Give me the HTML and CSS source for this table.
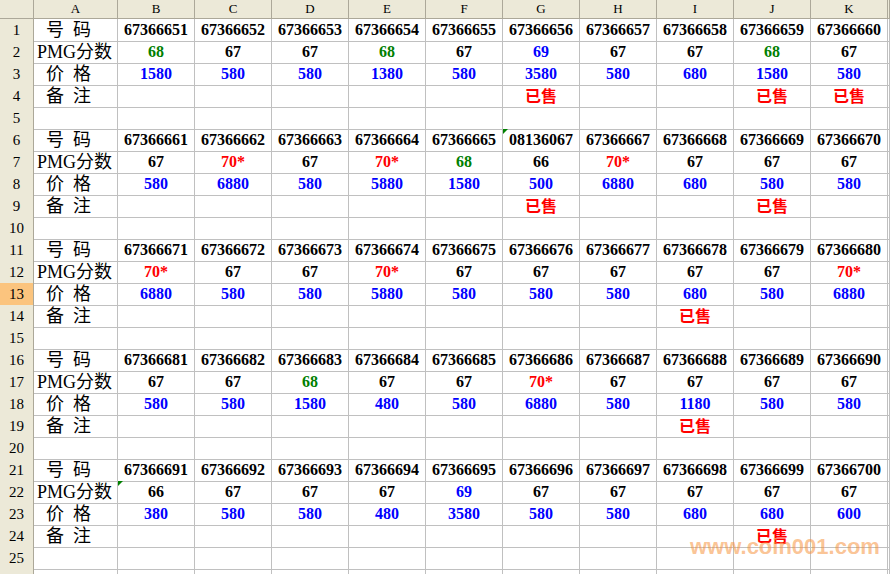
FILE: index.html
```html
<!DOCTYPE html>
<html>
<head>
<meta charset="utf-8">
<link rel="stylesheet" href="styles.css">
</head>
<body>
<div class="sheet">
  <div class="row top">
    <div class="h corner"></div><div class="h col">A</div><div class="h col">B</div><div class="h col">C</div><div class="h col">D</div><div class="h col">E</div><div class="h col">F</div><div class="h col">G</div><div class="h col">H</div><div class="h col">I</div><div class="h col">J</div><div class="h col">K</div><div class="h col"></div>
  </div>

  <div class="row"><div class="h">1</div><div class="a">  号  码</div><div class="k">67366651</div><div class="k">67366652</div><div class="k">67366653</div><div class="k">67366654</div><div class="k">67366655</div><div class="k">67366656</div><div class="k">67366657</div><div class="k">67366658</div><div class="k">67366659</div><div class="k">67366660</div><div></div></div>
  <div class="row"><div class="h">2</div><div class="a">PMG分数</div><div class="g">68</div><div class="k">67</div><div class="k">67</div><div class="g">68</div><div class="k">67</div><div class="b">69</div><div class="k">67</div><div class="k">67</div><div class="g">68</div><div class="k">67</div><div></div></div>
  <div class="row"><div class="h">3</div><div class="a">  价  格</div><div class="b">1580</div><div class="b">580</div><div class="b">580</div><div class="b">1380</div><div class="b">580</div><div class="b">3580</div><div class="b">580</div><div class="b">680</div><div class="b">1580</div><div class="b">580</div><div></div></div>
  <div class="row"><div class="h">4</div><div class="a">  备  注</div><div></div><div></div><div></div><div></div><div></div><div class="s">已售</div><div></div><div></div><div class="s">已售</div><div class="s">已售</div><div></div></div>
  <div class="row"><div class="h">5</div><div></div><div></div><div></div><div></div><div></div><div></div><div></div><div></div><div></div><div></div><div></div><div></div></div>

  <div class="row"><div class="h">6</div><div class="a">  号  码</div><div class="k">67366661</div><div class="k">67366662</div><div class="k">67366663</div><div class="k">67366664</div><div class="k">67366665</div><div class="k cm">08136067</div><div class="k">67366667</div><div class="k">67366668</div><div class="k">67366669</div><div class="k">67366670</div><div></div></div>
  <div class="row"><div class="h">7</div><div class="a">PMG分数</div><div class="k">67</div><div class="r">70*</div><div class="k">67</div><div class="r">70*</div><div class="g">68</div><div class="k">66</div><div class="r">70*</div><div class="k">67</div><div class="k">67</div><div class="k">67</div><div></div></div>
  <div class="row"><div class="h">8</div><div class="a">  价  格</div><div class="b">580</div><div class="b">6880</div><div class="b">580</div><div class="b">5880</div><div class="b">1580</div><div class="b">500</div><div class="b">6880</div><div class="b">680</div><div class="b">580</div><div class="b">580</div><div></div></div>
  <div class="row"><div class="h">9</div><div class="a">  备  注</div><div></div><div></div><div></div><div></div><div></div><div class="s">已售</div><div></div><div></div><div class="s">已售</div><div></div><div></div></div>
  <div class="row"><div class="h">10</div><div></div><div></div><div></div><div></div><div></div><div></div><div></div><div></div><div></div><div></div><div></div><div></div></div>

  <div class="row"><div class="h">11</div><div class="a">  号  码</div><div class="k">67366671</div><div class="k">67366672</div><div class="k">67366673</div><div class="k">67366674</div><div class="k">67366675</div><div class="k">67366676</div><div class="k">67366677</div><div class="k">67366678</div><div class="k">67366679</div><div class="k">67366680</div><div></div></div>
  <div class="row"><div class="h">12</div><div class="a">PMG分数</div><div class="r">70*</div><div class="k">67</div><div class="k">67</div><div class="r">70*</div><div class="k">67</div><div class="k">67</div><div class="k">67</div><div class="k">67</div><div class="k">67</div><div class="r">70*</div><div></div></div>
  <div class="row"><div class="h sel">13</div><div class="a">  价  格</div><div class="b">6880</div><div class="b">580</div><div class="b">580</div><div class="b">5880</div><div class="b">580</div><div class="b">580</div><div class="b">580</div><div class="b">680</div><div class="b">580</div><div class="b">6880</div><div></div></div>
  <div class="row"><div class="h">14</div><div class="a">  备  注</div><div></div><div></div><div></div><div></div><div></div><div></div><div></div><div class="s">已售</div><div></div><div></div><div></div></div>
  <div class="row"><div class="h">15</div><div></div><div></div><div></div><div></div><div></div><div></div><div></div><div></div><div></div><div></div><div></div><div></div></div>

  <div class="row"><div class="h">16</div><div class="a">  号  码</div><div class="k">67366681</div><div class="k">67366682</div><div class="k">67366683</div><div class="k">67366684</div><div class="k">67366685</div><div class="k">67366686</div><div class="k">67366687</div><div class="k">67366688</div><div class="k">67366689</div><div class="k">67366690</div><div></div></div>
  <div class="row"><div class="h">17</div><div class="a">PMG分数</div><div class="k">67</div><div class="k">67</div><div class="g">68</div><div class="k">67</div><div class="k">67</div><div class="r">70*</div><div class="k">67</div><div class="k">67</div><div class="k">67</div><div class="k">67</div><div></div></div>
  <div class="row"><div class="h">18</div><div class="a">  价  格</div><div class="b">580</div><div class="b">580</div><div class="b">1580</div><div class="b">480</div><div class="b">580</div><div class="b">6880</div><div class="b">580</div><div class="b">1180</div><div class="b">580</div><div class="b">580</div><div></div></div>
  <div class="row"><div class="h">19</div><div class="a">  备  注</div><div></div><div></div><div></div><div></div><div></div><div></div><div></div><div class="s">已售</div><div></div><div></div><div></div></div>
  <div class="row"><div class="h">20</div><div></div><div></div><div></div><div></div><div></div><div></div><div></div><div></div><div></div><div></div><div></div><div></div></div>

  <div class="row"><div class="h">21</div><div class="a">  号  码</div><div class="k">67366691</div><div class="k">67366692</div><div class="k">67366693</div><div class="k">67366694</div><div class="k">67366695</div><div class="k">67366696</div><div class="k">67366697</div><div class="k">67366698</div><div class="k">67366699</div><div class="k">67366700</div><div></div></div>
  <div class="row"><div class="h">22</div><div class="a">PMG分数</div><div class="k cm">66</div><div class="k">67</div><div class="k">67</div><div class="k">67</div><div class="b">69</div><div class="k">67</div><div class="k">67</div><div class="k">67</div><div class="k">67</div><div class="k">67</div><div></div></div>
  <div class="row"><div class="h">23</div><div class="a">  价  格</div><div class="b">380</div><div class="b">580</div><div class="b">580</div><div class="b">480</div><div class="b">3580</div><div class="b">580</div><div class="b">580</div><div class="b">680</div><div class="b">680</div><div class="b">600</div><div></div></div>
  <div class="row"><div class="h">24</div><div class="a">  备  注</div><div></div><div></div><div></div><div></div><div></div><div></div><div></div><div></div><div class="s">已售</div><div></div><div></div></div>
  <div class="row"><div class="h">25</div><div></div><div></div><div></div><div></div><div></div><div></div><div></div><div></div><div></div><div></div><div></div><div></div></div>
  <div class="row"><div class="h"></div><div></div><div></div><div></div><div></div><div></div><div></div><div></div><div></div><div></div><div></div><div></div><div></div></div>

  <div class="mark">www.coin001.com</div>
</div>
</body>
</html>
```

FILE: styles.css
```css
html, body {
  margin: 0;
  padding: 0;
  background: #ffffff;
  overflow: hidden;
}
.sheet {
  position: relative;
  width: 890px;
  height: 574px;
  overflow: hidden;
  display: flex;
  flex-direction: column;
}
.row {
  display: grid;
  grid-template-columns: 34px 84px repeat(10, 77px) 1fr;
  height: 22px;
  flex: none;
}
.row.top {
  height: 19px;
}
.row > div {
  box-sizing: border-box;
  border-right: 1px solid #c0c0c0;
  border-bottom: 1px solid #c0c0c0;
  white-space: pre;
  overflow: visible;
  line-height: 21px;
}
.row > .h {
  background: #ece9d8;
  border-right: 1px solid #aca899;
  border-bottom: 1px solid #c8c4b4;
  font: 15px "Liberation Serif", serif;
  color: #000;
  text-align: center;
  line-height: 22px;
}
.row.top > .h {
  border-bottom: 1px solid #aca899;
  font-size: 13px;
  line-height: 18px;
}
.row > .h.sel {
  background: #fbc47e;
  border-bottom-color: #c89a5c;
}
.row > .a {
  font: 18px "Liberation Serif", "Noto Sans CJK SC", serif;
  color: #000;
  padding-left: 3px;
  line-height: 22px;
}
.k, .g, .b, .r {
  font: bold 16px "Liberation Serif", serif;
  text-align: center;
}
.k { color: #000000; }
.g { color: #008000; }
.b { color: #0000ff; }
.r { color: #ff0000; }
.s {
  font: bold 16px "Noto Sans CJK SC", sans-serif;
  color: #ff0000;
  text-align: center;
}
.cm {
  position: relative;
}
.cm::before {
  content: "";
  position: absolute;
  left: 0;
  top: 0;
  width: 0;
  height: 0;
  border-top: 5px solid #008000;
  border-right: 5px solid transparent;
}
.mark {
  position: absolute;
  left: 690px;
  top: 536px;
  font: bold 22px "Liberation Sans", sans-serif;
  line-height: 22px;
  color: rgba(247, 146, 60, 0.55);
  white-space: nowrap;
}
```
